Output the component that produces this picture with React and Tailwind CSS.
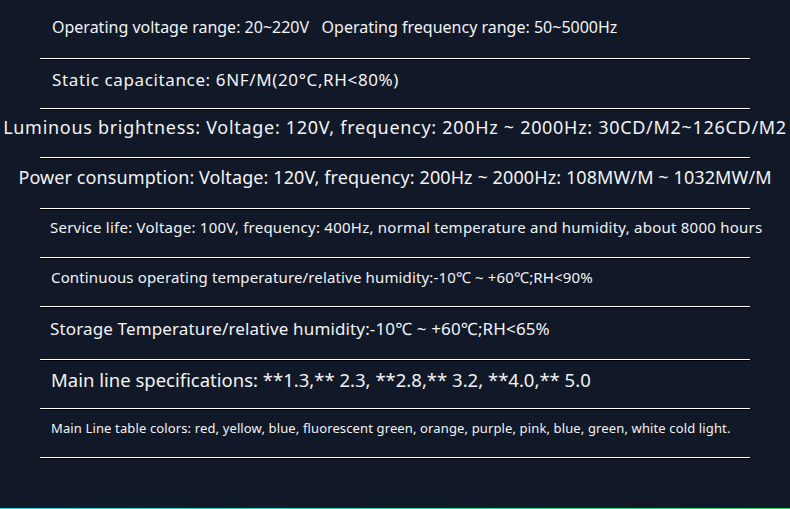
import React from 'react';

const Row = ({ children, className = '', textClass = '', center = false }) => (
  <div className={`border-b border-white shadow-[0_1px_0_#000] ${className}`}>
    <div className={`${center ? 'flex justify-center' : ''} whitespace-nowrap ${textClass}`}>
      {children}
    </div>
  </div>
);

const App = () => {
  return (
    <div className="h-[509px] w-full bg-[#111827] flex flex-col text-[#f1f3f5] overflow-hidden" style={{ fontFamily: '"Noto Sans", "Open Sans", sans-serif' }}>
      <div className="flex-1">
        <div className="w-[710px] mx-auto">
          {/* voltage / frequency */}
          <Row className="h-[59px] pt-[16px]" textClass="pl-3 text-[16px] leading-[22px]">
            Operating voltage range: 20~220V&nbsp;&nbsp; Operating frequency range: 50~5000Hz
          </Row>
          <Row className="h-[50px] pt-[9px]" textClass="pl-3 text-[17px] leading-[24px] tracking-[0.63px]">
            Static capacitance: 6NF/M(20°C,RH&lt;80%)
          </Row>
          <Row className="h-[49px] pt-[5px]" textClass="text-[18px] leading-[26px] tracking-[0.7px]" center>
            Luminous brightness: Voltage: 120V, frequency: 200Hz ~ 2000Hz: 30CD/M2~126CD/M2
          </Row>
          <Row className="h-[51px] pt-[6px]" textClass="text-[18px] leading-[26px] tracking-[0.1px]" center>
            Power consumption: Voltage: 120V, frequency: 200Hz ~ 2000Hz: 108MW/M ~ 1032MW/M
          </Row>
          <Row className="h-[49px] pt-[8px]" textClass="pl-[10px] text-[15px] leading-[20px] tracking-[0.24px]">
            Service life: Voltage: 100V, frequency: 400Hz, normal temperature and humidity, about 8000 hours
          </Row>
          <Row className="h-[49px] pt-[9px]" textClass="pl-[11px] text-[15px] leading-[20px] tracking-[0.15px]">
            Continuous operating temperature/relative humidity:-10℃ ~ +60℃;RH&lt;90%
          </Row>
          <Row className="h-[53px] pt-[10px]" textClass="pl-[10px] text-[17px] leading-[24px] tracking-[0.14px]">
            Storage Temperature/relative humidity:-10℃ ~ +60℃;RH&lt;65%
          </Row>
          <Row className="h-[49px] pt-[7px]" textClass="pl-[11px] text-[18.5px] leading-[26px]">
            Main line specifications: **1.3,** 2.3, **2.8,** 3.2, **4.0,** 5.0
          </Row>
          <Row className="h-[49px] pt-[9px]" textClass="pl-[11px] text-[13px] leading-[20px] tracking-[0.13px]">
            Main Line table colors: red, yellow, blue, fluorescent green, orange, purple, pink, blue, green, white cold light.
          </Row>
        </div>
      </div>
      <div className="h-px bg-gradient-to-r from-[#1fd8e6] to-[#22e35a]" />
    </div>
  );
};

export default App;
